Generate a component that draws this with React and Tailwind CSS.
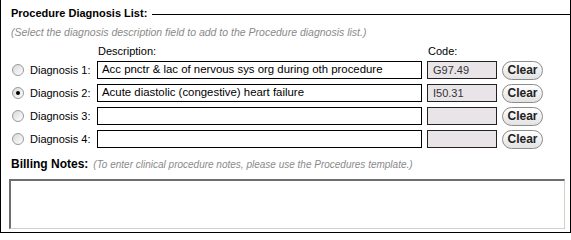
import { useState } from 'react'

const rows = [
  { id: 1, desc: 'Acc pnctr & lac of nervous sys org during oth procedure', code: 'G97.49' },
  { id: 2, desc: 'Acute diastolic (congestive) heart failure', code: 'I50.31' },
  { id: 3, desc: '', code: '' },
  { id: 4, desc: '', code: '' },
]

const Radio = ({ checked, onClick }) => (
  <span
    onClick={onClick}
    className="w-[12px] h-[12px] rounded-full border border-[#9a9a9a] bg-gradient-to-br from-[#d8d8d8] to-white flex items-center justify-center shrink-0 cursor-pointer"
  >
    {checked && <span className="w-[4px] h-[4px] rounded-full bg-black" />}
  </span>
)

const App = () => {
  const [selected, setSelected] = useState(2)

  return (
    <div
      className="w-[571px] h-[233px] border-x border-b border-black bg-white text-black"
      style={{ fontFamily: '"Liberation Sans", Arial, sans-serif' }}
    >
      {/* Header */}
      <div className="flex items-center pl-[10px] pt-[7px]">
        <span className="text-[11px] leading-[13px] font-bold">Procedure Diagnosis List:</span>
        <div className="flex-1 h-px bg-black ml-[5px] mt-[2px]" />
      </div>
      <p className="pl-[10px] mt-[6px] text-[10.5px] leading-[12px] italic text-[#8a8a8a]">
        (Select the diagnosis description field to add to the Procedure diagnosis list.)
      </p>

      {/* Column labels */}
      <div className="flex mt-[7px] text-[11px] leading-[13px]">
        <span className="ml-[97px] w-[330px]">Description:</span>
        <span>Code:</span>
      </div>

      {/* Diagnosis rows */}
      <div className="flex flex-col gap-[5px] mt-[3px]">
        {rows.map((row) => (
          <div key={row.id} className="flex items-center h-[18px] text-[11px]">
            <div className="w-[29px] pl-[11px] flex">
              <Radio checked={selected === row.id} onClick={() => setSelected(row.id)} />
            </div>
            <span className="w-[67px]">Diagnosis {row.id}:</span>
            <div className="w-[325px] h-[18px] border border-black px-[4px] flex items-center text-[11.4px]">
              {row.desc}
            </div>
            <div className="ml-[5px] w-[70px] h-[18px] border border-[#222] bg-[#e8e4e8] px-[5px] flex items-center text-[#333]">
              {row.code}
            </div>
            <button className="ml-[5px] w-[41px] h-[19px] rounded-full border border-[#8c8c8c] bg-gradient-to-b from-white to-[#e2e2e2] text-[12px] font-bold text-[#222] leading-none">
              Clear
            </button>
          </div>
        ))}
      </div>

      {/* Billing notes */}
      <div className="flex items-baseline pl-[10px] mt-[9px]">
        <span className="text-[12px] leading-[14px] font-bold">Billing Notes:</span>
        <span className="ml-[5px] text-[10px] italic text-[#8a8a8a]">
          (To enter clinical procedure notes, please use the Procedures template.)
        </span>
      </div>
      <div className="ml-[8px] mt-[7px] w-[556px] h-[50px] border-t-2 border-l-2 border-r border-b border-t-[#6e6e6e] border-l-[#6e6e6e] border-r-[#d4d0c8] border-b-[#d4d0c8]" />
    </div>
  )
}

export default App
